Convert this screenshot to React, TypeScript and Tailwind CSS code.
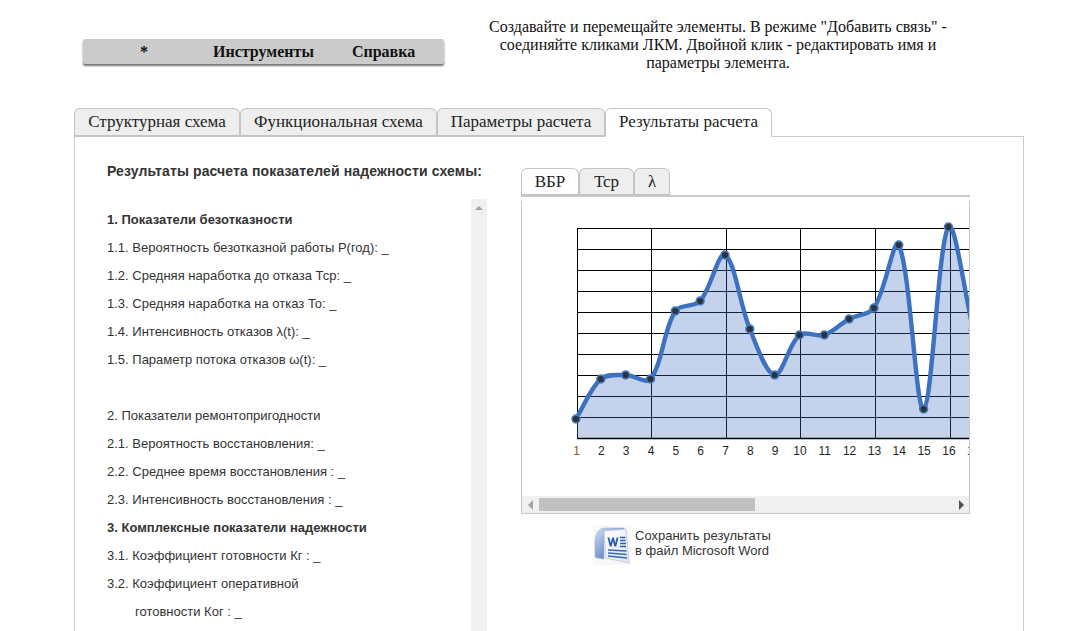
const serif = "font-['Liberation_Serif','Times_New_Roman',serif]";

const mainTabs = [
  { label: "Структурная схема", width: "w-[166px]" },
  { label: "Функциональная схема", width: "w-[197px]" },
  { label: "Параметры расчета", width: "w-[168px]" },
  { label: "Результаты расчета", width: "w-[167px]", active: true },
];

const chartTabs = [
  { label: "ВБР", width: "w-[58px]", active: true },
  { label: "Tcp", width: "w-[55px]" },
  { label: "λ", width: "w-[36px]" },
];

const rows = [
  { text: "1. Показатели безотказности", bold: true },
  { text: "1.1. Вероятность безотказной работы Р(год): _" },
  { text: "1.2. Средняя наработка до отказа Тср: _" },
  { text: "1.3. Средняя наработка на отказ То: _" },
  { text: "1.4. Интенсивность отказов λ(t): _" },
  { text: "1.5. Параметр потока отказов ω(t): _" },
  { text: "" },
  { text: "2. Показатели ремонтопригодности" },
  { text: "2.1. Вероятность восстановления: _" },
  { text: "2.2. Среднее время восстановления : _" },
  { text: "2.3. Интенсивность восстановления : _" },
  { text: "3. Комплексные показатели надежности", bold: true },
  { text: "3.1. Коэффициент готовности Кг : _" },
  { text: "3.2. Коэффициент оперативной" },
  { text: "готовности Ког : _", indent: true },
];

// chart points in page coordinates, the svg viewBox below uses the same numbers
const values = [419, 379, 375, 379, 311, 301, 255, 329, 375, 335, 335, 319, 308, 245, 409, 227, 330];
const points = values.map((y, i) => ({ x: 576 + i * 24.83, y }));
const gridY = [228.5, 249.5, 270.5, 291.5, 312.5, 333.5, 354.5, 375.5, 396.5, 417.5];
const gridX = [577.5, 651.5, 726.5, 800.5, 875.5, 950.5];

type Pt = { x: number; y: number };
const dist = (a: Pt, b: Pt) => Math.hypot(b.x - a.x, b.y - a.y);

// tangent keeps the neighbours' direction, its share goes by chord length
function smoothPath() {
  let d = `M${points[0].x} ${points[0].y}`;
  for (let i = 0; i < points.length - 1; i++) {
    const p0 = points[Math.max(i - 1, 0)];
    const p1 = points[i];
    const p2 = points[i + 1];
    const p3 = points[Math.min(i + 2, points.length - 1)];
    const len = dist(p1, p2);
    const a = len / (dist(p0, p1) + len) / 3;
    const b = len / (dist(p2, p3) + len) / 3;
    d += ` C${p1.x + (p2.x - p0.x) * a} ${p1.y + (p2.y - p0.y) * a} ${p2.x - (p3.x - p1.x) * b} ${p2.y - (p3.y - p1.y) * b} ${p2.x} ${p2.y}`;
  }
  return d;
}

function Chart() {
  const line = smoothPath();
  const last = points[points.length - 1];
  return (
    <svg width="448" height="295" viewBox="522 201 448 295" className="block">
      {gridY.map((y) => (
        <line key={y} x1="577" x2="970" y1={y} y2={y} stroke="#000" strokeWidth="1" />
      ))}
      {gridX.map((x) => (
        <line key={x} x1={x} x2={x} y1="228" y2="438" stroke="#000" strokeWidth="1" />
      ))}
      <path d={`${line} L${last.x} 438 L577 438 L577 416 Z`} fill="#3f70bd" fillOpacity="0.31" />
      <line x1="577" x2="970" y1="438.5" y2="438.5" stroke="#000" strokeWidth="1.5" />
      <path d={line} fill="none" stroke="#3d72c0" strokeWidth="4.4" strokeLinejoin="round" />
      {points.map((p) => (
        <circle key={p.x} cx={p.x} cy={p.y} r="3.9" fill="#2f3238" stroke="#4278c6" strokeWidth="1.6" />
      ))}
      {points.map((p, i) => (
        <text
          key={i}
          x={p.x + 0.5}
          y="455"
          textAnchor="middle"
          fontSize="12"
          fill={i === 0 ? "#8a5a12" : "#1f1f1f"}
          fontFamily="'Liberation Sans', Arial, sans-serif"
        >
          {i + 1}
        </text>
      ))}
    </svg>
  );
}

function WordIcon() {
  return (
    <svg width="38" height="40" viewBox="0 0 38 40" className="shrink-0">
      <defs>
        <linearGradient id="wordBack" x1="0" y1="0" x2="1" y2="1">
          <stop offset="0" stopColor="#d3e0f2" />
          <stop offset="0.5" stopColor="#7f9fd2" />
          <stop offset="1" stopColor="#4468ab" />
        </linearGradient>
        <linearGradient id="wordPage" x1="0" y1="0" x2="1" y2="1">
          <stop offset="0" stopColor="#ffffff" />
          <stop offset="1" stopColor="#dde6f1" />
        </linearGradient>
      </defs>
      <rect x="0" y="0" width="38" height="40" fill="#f8f8f8" />
      <path d="M2 16C3 8 6 3 12 3H31V5L11 7V34L4 33C3 33 2 32 2 31Z" fill="url(#wordBack)" stroke="#9db1d0" strokeWidth="0.6" />
      <path d="M11 6L33 4L36 38L13 33Z" fill="url(#wordPage)" stroke="#b5c2d4" strokeWidth="0.7" />
      <path d="M14.5 12.5L16.8 21.5H18.6L20 16L21.4 21.5H23.2L25.5 12.5H23.6L22.3 18L20.9 12.5H19.1L17.7 18L16.4 12.5Z" fill="#2c5da8" />
      <path d="M27 12.5H32.5M27 15.5H32.5M27 18.5H33M27 21.5H33" stroke="#2c5da8" strokeWidth="1.3" />
      <path d="M15 25L33.5 26M15 28L33.5 29.5M15 31L34 33" stroke="#3a68b0" strokeWidth="1.6" />
    </svg>
  );
}

function Triangle({ dir }: { dir: "up" | "left" | "right" }) {
  const d = dir === "up" ? "M1 6L5 2L9 6Z" : dir === "left" ? "M7 0L2 5L7 10Z" : "M3 0L8 5L3 10Z";
  return (
    <svg width="10" height="10" viewBox="0 0 10 10">
      <path d={d} fill={dir === "right" ? "#505050" : "#a3a3a3"} />
    </svg>
  );
}

export default function App() {
  return (
    <div className={`h-[631px] w-[1092px] overflow-hidden bg-white ${serif}`}>
      <div className="flex h-[108px] items-start">
        <div className="ml-[83px] mt-[39px] flex h-[25px] w-[361px] items-center rounded-[2px] bg-[#cbcbcb] text-[16px] font-bold text-[#111] shadow-[0_2px_2px_rgba(0,0,0,0.55)]">
          <span className="ml-[57px] w-[73px]">*</span>
          <span>Инструменты</span>
          <span className="ml-[38px]">Справка</span>
        </div>
        <p className="ml-[34px] mt-[18px] w-[480px] text-center text-[16px] leading-[18px] whitespace-nowrap text-[#111]">
          Создавайте и перемещайте элементы. В режиме "Добавить связь" -
          <br />
          соединяйте кликами ЛКМ. Двойной клик - редактировать имя и
          <br />
          параметры элемента.
        </p>
      </div>

      <div className="ml-[74px] flex h-[28px] w-[950px]">
        {mainTabs.map((tab) => (
          <div
            key={tab.label}
            className={`flex h-[29px] items-center justify-center rounded-t-[6px] border border-[#c4c4c4] pb-[1px] text-[17px] text-[#222] ${tab.width} ${
              tab.active ? "z-10 border-b-white bg-white" : "border-b-2 bg-[#eeeeee]"
            }`}
          >
            {tab.label}
          </div>
        ))}
      </div>

      <div className="ml-[74px] flex h-[600px] w-[950px] border border-[#cccccc] pl-[32px] font-['Liberation_Sans',Arial,sans-serif]">
        <div className="w-[380px]">
          <h2 className="mt-[25px] h-[37px] text-[14px] leading-[18px] font-bold tracking-[0.125px] whitespace-nowrap text-[#333]">
            Результаты расчета показателей надежности схемы:
          </h2>
          <div className="flex">
            <ul className="w-[364px] pt-[7px] text-[13px] text-[#333]">
              {rows.map((row, i) => (
                <li
                  key={i}
                  className={`h-[28px] leading-[28px] whitespace-nowrap ${row.bold ? "font-bold" : ""} ${
                    row.indent ? "pl-[28px]" : ""
                  }`}
                >
                  {row.text}
                </li>
              ))}
            </ul>
            <div className="flex h-[500px] w-[16px] justify-center bg-[#f0f0f0] pt-[5px]">
              <Triangle dir="up" />
            </div>
          </div>
        </div>

        <div className="ml-[34px] w-[449px]">
          <div className={`mt-[31px] flex h-[29px] border-b-2 border-[#cccccc] ${serif}`}>
            {chartTabs.map((tab) => (
              <div
                key={tab.label}
                className={`flex h-[28px] items-center justify-center rounded-t-[6px] border border-b-2 border-[#c4c4c4] text-[17px] text-[#222] ${tab.width} ${
                  tab.active ? "bg-white" : "bg-[#eeeeee]"
                }`}
              >
                {tab.label}
              </div>
            ))}
          </div>
          <div className="mt-[4px] border-b border-l border-[#c8c8c8]">
            <div className="h-[295px] overflow-hidden border-r border-[#c8c8c8]">
              <Chart />
            </div>
            <div className="flex h-[17px] items-center border-r border-[#c8c8c8] bg-[#f0f0f0] pr-[3px] pl-[4px]">
              <Triangle dir="left" />
              <div className="ml-[3px] h-[13px] w-[216px] bg-[#c0c0c0]" />
              <div className="flex-1" />
              <Triangle dir="right" />
            </div>
          </div>
          <div className="mt-[11px] ml-[72px] flex items-center gap-[4px]">
            <WordIcon />
            <p className="pb-[5px] text-[13px] leading-[15px] text-[#333]">
              Сохранить результаты
              <br />в файл Microsoft Word
            </p>
          </div>
        </div>
      </div>
    </div>
  );
}
